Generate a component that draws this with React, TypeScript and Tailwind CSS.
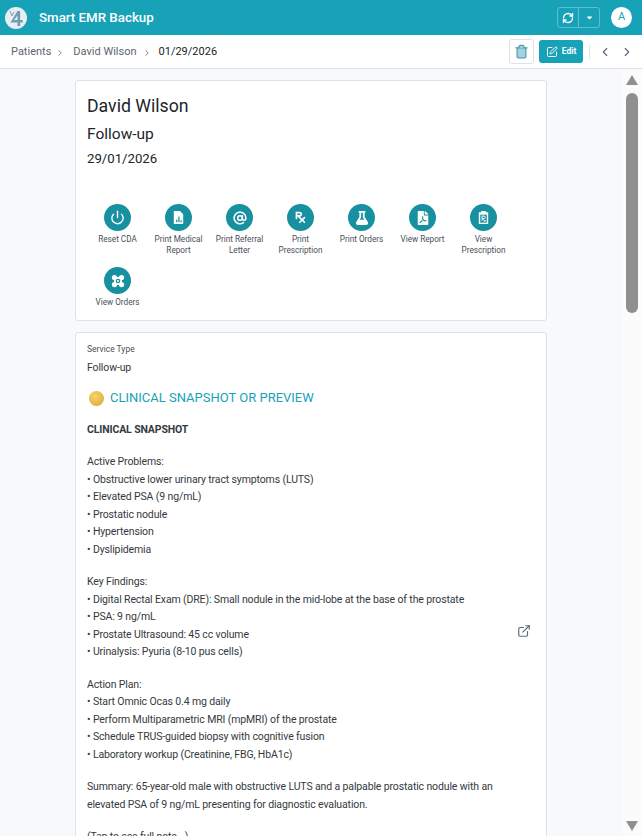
import React from 'react';
import { AtSign, ChevronLeft, ChevronRight, ExternalLink, Power, RefreshCw, SquarePen, Trash2 } from 'lucide-react';
import { FaCaretDown, FaFilePdf, FaFlask, FaPrescription } from 'react-icons/fa';

const font = "font-['Roboto','Liberation_Sans',sans-serif]";

const ReportIcon = () => (
  <svg viewBox="0 0 16 16" className="h-[15px] w-[15px]">
    <path d="M3 1h6.5L13 4.5V15H3z" fill="#fff" />
    <path d="M5.5 13V10h1.3v3zM7.8 13V7h1.3v6zM10.1 13v-2h1.3v2z" fill="#17909f" />
  </svg>
);

const ClipRxIcon = () => (
  <svg viewBox="0 0 16 16" className="h-[15px] w-[15px]">
    <path d="M3 2.5h2.5V1h5v1.5H13V15H3z" fill="#fff" />
    <rect x="4.5" y="5" width="7" height="8.5" fill="#17909f" />
    <path d="M6 6.5h2.6a1.2 1.2 0 010 2.6H6.8l3.2 3.4M6.5 6.5v5M8.5 12.5l2-2" stroke="#fff" strokeWidth="1" fill="none" />
  </svg>
);

const OrdersIcon = () => (
  <svg viewBox="0 0 16 16" className="h-[14px] w-[14px]" fill="#fff">
    <circle cx="4" cy="4" r="3" />
    <circle cx="12" cy="4" r="3" />
    <circle cx="4" cy="12" r="3" />
    <circle cx="12" cy="12" r="3" />
    <rect x="3.5" y="3.5" width="9" height="9" rx="1" />
    <circle cx="8" cy="8" r="2.6" fill="#17909f" />
    <circle cx="8" cy="8" r="1.2" />
  </svg>
);

const actions = [
  { label: 'Reset CDA', icon: <Power className="h-[15px] w-[15px]" strokeWidth={2.2} /> },
  { label: 'Print Medical Report', icon: <ReportIcon /> },
  { label: 'Print Referral Letter', icon: <AtSign className="h-[14px] w-[14px]" strokeWidth={2.6} /> },
  { label: 'Print Prescription', icon: <FaPrescription className="h-[13px] w-[13px]" /> },
  { label: 'Print Orders', icon: <FaFlask className="h-[14px] w-[14px]" /> },
  { label: 'View Report', icon: <FaFilePdf className="h-[14px] w-[14px]" /> },
  { label: 'View Prescription', icon: <ClipRxIcon /> },
  { label: 'View Orders', icon: <OrdersIcon /> },
];

const sections = [
  ['Active Problems:', '• Obstructive lower urinary tract symptoms (LUTS)', '• Elevated PSA (9 ng/mL)', '• Prostatic nodule', '• Hypertension', '• Dyslipidemia'],
  ['Key Findings:', '• Digital Rectal Exam (DRE): Small nodule in the mid-lobe at the base of the prostate', '• PSA: 9 ng/mL', '• Prostate Ultrasound: 45 cc volume', '• Urinalysis: Pyuria (8-10 pus cells)'],
  ['Action Plan:', '• Start Omnic Ocas 0.4 mg daily', '• Perform Multiparametric MRI (mpMRI) of the prostate', '• Schedule TRUS-guided biopsy with cognitive fusion', '• Laboratory workup (Creatinine, FBG, HbA1c)'],
  ['Summary: 65-year-old male with obstructive LUTS and a palpable prostatic nodule with an', 'elevated PSA of 9 ng/mL presenting for diagnostic evaluation.'],
  ['(Tap to see full note...)'],
];

export default function App() {
  return (
    <div className={`${font} flex h-[836px] w-[642px] flex-col overflow-hidden bg-white text-[#343a40]`}>
      <header className="flex h-[35px] shrink-0 items-center bg-[#17a2b8] pl-[5px] pr-[10px] text-white">
        <svg viewBox="0 0 22 22" className="h-[22px] w-[22px]">
          <circle cx="11" cy="11" r="11" fill="#e6eef1" />
          <path d="M12.5 4h2.6v9h2.6v2.4h-2.6V19h-2.6v-3.6H5.5zM12.5 8.5L9 13h3.5z" fill="#6d9db4" />
          <path d="M5 4l2 5 2-4" stroke="#8aa0aa" strokeWidth="1" fill="none" />
        </svg>
        <span className="ml-[12px] text-[13.3px] font-medium">Smart EMR Backup</span>
        <div className="ml-auto flex h-[21px] w-[43px] rounded-[3px] border border-white/30">
          <div className="flex w-[21px] items-center justify-center border-r border-white/30">
            <RefreshCw className="h-[12px] w-[12px]" strokeWidth={2.6} />
          </div>
          <div className="flex flex-1 items-center justify-center">
            <FaCaretDown className="h-[9px] w-[9px]" />
          </div>
        </div>
        <div className="ml-[11px] flex h-[21px] w-[21px] items-center justify-center rounded-full bg-white text-[11px] text-[#17a2b8]">A</div>
      </header>

      <div className="flex h-[34px] shrink-0 items-center border-b border-[#dee2e6] pl-[11px] pr-[8px] text-[11px]">
        <div className="flex items-center pt-[2px]">
          <span className="text-[#5d6470]">Patients</span>
          <ChevronRight className="ml-[4px] mr-[8px] h-[10px] w-[10px] text-[#6c757d]" />
          <span className="text-[#5d6470]">David Wilson</span>
          <ChevronRight className="ml-[5px] mr-[7px] h-[10px] w-[10px] text-[#6c757d]" />
          <span className="text-[#212529]">01/29/2026</span>
        </div>
        <div className="ml-auto flex items-center">
          <div className="flex h-[25px] w-[25px] items-center justify-center rounded-[3px] border border-[#dee2e6]">
            <Trash2 className="h-[15px] w-[15px] fill-[#a5d3dd] text-[#4f9fb2]" />
          </div>
          <div className="ml-[5px] flex h-[23px] w-[44px] items-center justify-center gap-[4px] rounded-[3px] bg-[#17a2b8] text-[8.5px] font-bold text-white">
            <SquarePen className="h-[12px] w-[12px]" />
            Edit
          </div>
          <div className="ml-[6px] h-[14px] w-px bg-[#dee2e6]" />
          <ChevronLeft className="ml-[8px] h-[14px] w-[14px] text-[#5d6b80]" />
          <ChevronRight className="ml-[8px] h-[14px] w-[14px] text-[#5d6b80]" />
        </div>
      </div>

      <div className="flex min-h-0 flex-1">
        <main className="w-[622px] overflow-hidden bg-[#f8f9fa] pl-[75px] pt-[11px]">
          <section className="h-[241px] w-[472px] rounded-[3px] border border-[#dee2e6] bg-white pl-[11px] pt-[13px]">
            <h1 className="text-[17.7px] leading-[24px] text-[#212529]">David Wilson</h1>
            <p className="mt-[5px] text-[15.5px] leading-[22px] text-[#212529]">Follow-up</p>
            <p className="mt-[4px] text-[13.2px] leading-[20px] text-[#212529]">29/01/2026</p>
            <div className="mt-[35px] flex flex-wrap">
              {actions.map((a) => (
                <div key={a.label} className="flex h-[63px] w-[61px] flex-col items-center px-[2px] text-center">
                  <div className="flex h-[27px] w-[27px] shrink-0 items-center justify-center rounded-full bg-[#17909f] text-white">{a.icon}</div>
                  <div className="mt-[3px] text-[8.2px] leading-[11px] text-[#495057]">{a.label}</div>
                </div>
              ))}
            </div>
          </section>

          <section className="relative mt-[11px] h-[600px] w-[472px] rounded-[3px] border border-[#dee2e6] bg-white pl-[11px] pt-[10px] text-[10.5px] tracking-[-0.13px]">
            <div className="text-[8.5px] leading-[12px] tracking-normal text-[#495057]">Service Type</div>
            <div className="mt-[5px] leading-[16px] text-[#343a40]">Follow-up</div>
            <div className="mt-[12px] flex items-center pl-[2px]">
              <div className="h-[15px] w-[15px] rounded-full bg-[radial-gradient(circle_at_40%_35%,#f6d365,#d9a43a)]" />
              <span className="ml-[6px] text-[13px] leading-[20px] tracking-normal text-[#17a2b8]">CLINICAL SNAPSHOT OR PREVIEW</span>
            </div>
            <div className="mt-[12.5px] h-[17.5px] font-bold leading-[17.5px]">CLINICAL SNAPSHOT</div>
            {sections.map((lines, i) => (
              <div key={i} className="mt-[15px]">
                {lines.map((l) => (
                  <div key={l} className="h-[17.5px] whitespace-nowrap leading-[17.5px]">{l}</div>
                ))}
              </div>
            ))}
            <ExternalLink className="absolute left-[441px] top-[291px] h-[14px] w-[14px] text-[#5d6b80]" />
          </section>
        </main>

        <aside className="flex w-[20px] flex-col items-center bg-[#fbfbfb] pt-[6px]">
          <div className="h-0 w-0 border-x-[6px] border-b-[10px] border-x-transparent border-b-[#8f8f8f]" />
          <div className="mt-[8px] h-[220px] w-[12px] rounded-[6px] bg-[#8f8f8f]" />
          <div className="mt-auto mb-[5px] h-0 w-0 border-x-[6px] border-t-[10px] border-x-transparent border-t-[#8f8f8f]" />
        </aside>
      </div>
    </div>
  );
}
